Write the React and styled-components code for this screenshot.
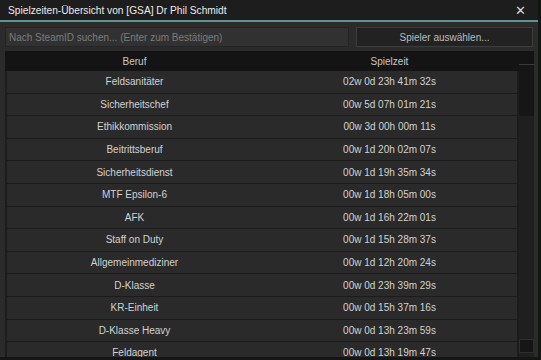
import React from "react";
import styled, { createGlobalStyle } from "styled-components";

const rows = [
  ["Feldsanitäter", "02w 0d 23h 41m 32s"],
  ["Sicherheitschef", "00w 5d 07h 01m 21s"],
  ["Ethikkommission", "00w 3d 00h 00m 11s"],
  ["Beitrittsberuf", "00w 1d 20h 02m 07s"],
  ["Sicherheitsdienst", "00w 1d 19h 35m 34s"],
  ["MTF Epsilon-6", "00w 1d 18h 05m 00s"],
  ["AFK", "00w 1d 16h 22m 01s"],
  ["Staff on Duty", "00w 1d 15h 28m 37s"],
  ["Allgemeinmediziner", "00w 1d 12h 20m 24s"],
  ["D-Klasse", "00w 0d 23h 39m 29s"],
  ["KR-Einheit", "00w 0d 15h 37m 16s"],
  ["D-Klasse Heavy", "00w 0d 13h 23m 59s"],
  ["Feldagent", "00w 0d 13h 19m 47s"],
];

const GlobalStyle = createGlobalStyle`
  html, body {
    margin: 0;
    padding: 0;
    background: #141614;
    overflow: hidden;
  }
  body {
    font-family: "Liberation Sans", Arial, sans-serif;
    font-size: 10px;
  }
`;

const Frame = styled.div`
  width: 538px;
  height: 357px;
  background: #2b2b2b;
  display: flex;
  flex-direction: column;
  overflow: hidden;
`;

const TitleBar = styled.div`
  height: 20px;
  flex-shrink: 0;
  background: #1d1d1d;
  border-bottom: 2px solid #5b9594;
  display: flex;
  align-items: center;
  justify-content: space-between;
  padding: 0 8px;
  color: #ececec;
  font-size: 10.2px;
`;

const Close = styled.span`
  font-size: 13px;
  font-weight: bold;
  color: #d8d8d8;
  font-family: "DejaVu Sans", sans-serif;
  margin-right: 4px;
`;

const Body = styled.div`
  flex: 1;
  display: flex;
  flex-direction: column;
  padding: 5px 4px 0 5px;
  gap: 4px;
  min-height: 0;
`;

const SearchRow = styled.div`
  display: flex;
  gap: 7px;
  height: 20px;
  flex-shrink: 0;
`;

const Search = styled.div`
  width: 344px;
  box-sizing: border-box;
  background: #313131;
  border: 1px solid #242424;
  color: #7c7c7c;
  display: flex;
  align-items: center;
  padding-left: 3px;
`;

const Pick = styled.div`
  flex: 1;
  box-sizing: border-box;
  background: #222222;
  border: 1px solid #3c3c3c;
  color: #bcbcbc;
  display: flex;
  align-items: center;
  justify-content: center;
  margin-right: 1px;
`;

const Table = styled.div`
  flex: 1;
  display: flex;
  flex-direction: column;
  min-height: 0;
  background: #1c1c1c;
`;

const Head = styled.div`
  height: 20px;
  flex-shrink: 0;
  background: #141414;
  display: flex;
  padding-left: 2px;
  padding-right: 17px;
  color: #c8c8c8;
`;

const Cell = styled.div`
  flex: 1;
  display: flex;
  align-items: center;
  justify-content: center;
  white-space: nowrap;
`;

const Content = styled.div`
  flex: 1;
  display: flex;
  min-height: 0;
`;

const List = styled.div`
  flex: 1;
  padding-left: 2px;
  overflow: hidden;
`;

const Row = styled.div`
  height: 21.6px;
  display: flex;
  background: #2a2a2a;
  border-bottom: 1px solid #1b1b1b;
  color: #d2d2d2;
`;

const Scroll = styled.div`
  width: 15px;
  margin-left: 2px;
  background: #1f1f1f;
  position: relative;
`;

const Thumb = styled.div`
  position: absolute;
  top: -7px;
  left: 0;
  right: 0;
  height: 51px;
  background: #161616;
  border-top: 1px solid #3a3a3a;
`;

const Arrow = styled.div`
  position: absolute;
  bottom: 4px;
  left: 0;
  right: 0;
  height: 14px;
  background: #161616;
  border: 1px solid #2e2e2e;
  box-sizing: border-box;
`;

export default function App() {
  return (
    <>
      <GlobalStyle />
      <Frame>
        <TitleBar>
          <span>Spielzeiten-Übersicht von [GSA] Dr Phil Schmidt</span>
          <Close>✕</Close>
        </TitleBar>
        <Body>
          <SearchRow>
            <Search>Nach SteamID suchen... (Enter zum Bestätigen)</Search>
            <Pick>Spieler auswählen...</Pick>
          </SearchRow>
          <Table>
            <Head>
              <Cell>Beruf</Cell>
              <Cell>Spielzeit</Cell>
            </Head>
            <Content>
              <List>
                {rows.map(([job, time]) => (
                  <Row key={job}>
                    <Cell>{job}</Cell>
                    <Cell>{time}</Cell>
                  </Row>
                ))}
              </List>
              <Scroll>
                <Thumb />
                <Arrow />
              </Scroll>
            </Content>
          </Table>
        </Body>
      </Frame>
    </>
  );
}
